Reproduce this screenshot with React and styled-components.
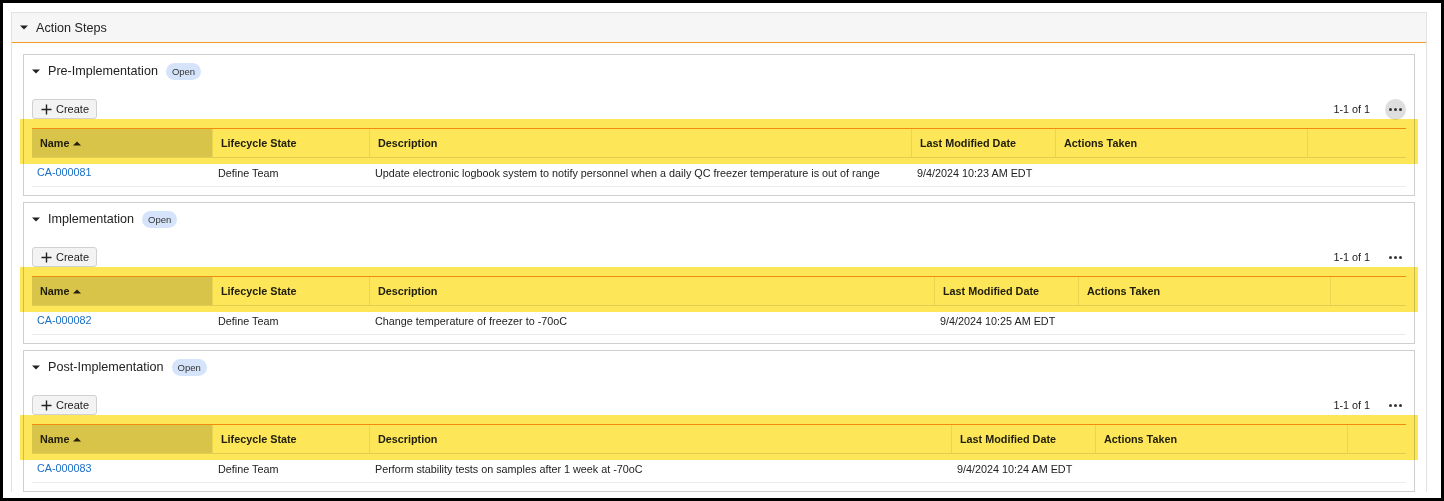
import React from "react";
import styled, { createGlobalStyle } from "styled-components";

const Global = createGlobalStyle`
  html, body { margin: 0; padding: 0; background: #fff; }
  body { font-family: "Liberation Sans", Arial, sans-serif; color: #222; }
  * { box-sizing: border-box; }
`;

const Frame = styled.div`
  width: 1444px;
  height: 501px;
  border: 3px solid #000;
  padding: 9px 14px 0 8px;
  overflow: hidden;
  background: #fff;
`;

const Panel = styled.section`
  border: 1px solid #e2e2e2;
  border-bottom: none;
`;

const PanelHeader = styled.div`
  height: 30px;
  display: flex;
  align-items: center;
  padding-left: 8px;
  gap: 8px;
  background: #f6f6f6;
  border-bottom: 1px solid #f39a23;
  font-size: 12.6px;
  color: #222;
`;

const PanelBody = styled.div`
  padding: 11px 11px 0 11px;
  display: flex;
  flex-direction: column;
  gap: 6px;
`;

const Box = styled.div`
  border: 1px solid #cfcfcf;
  padding: 7px 8px 8px 8px;
`;

const TitleRow = styled.div`
  height: 18px;
  display: flex;
  align-items: center;
  font-size: 12.6px;
  color: #222;
`;

const TitleText = styled.span`
  margin-left: 8px;
`;

const Badge = styled.span`
  margin-left: 8px;
  height: 17px;
  padding: 0 6px;
  border-radius: 9px;
  background: #d5e4fa;
  font-size: 9.5px;
  color: #333;
  display: inline-flex;
  align-items: center;
`;

const Toolbar = styled.div`
  margin-top: 19px;
  height: 20px;
  display: flex;
  align-items: center;
  justify-content: space-between;
`;

const CreateButton = styled.button`
  height: 20px;
  width: 65px;
  padding: 0 0 0 8px;
  display: inline-flex;
  align-items: center;
  gap: 4px;
  border: 1px solid #d0d0d0;
  border-radius: 3px;
  background: #f3f3f3;
  font-family: "Liberation Sans", Arial, sans-serif;
  font-size: 11px;
  color: #222;
  cursor: pointer;
`;

const Pager = styled.div`
  display: flex;
  align-items: center;
  gap: 15px;
  font-size: 10.8px;
  color: #222;
`;

const DotsButton = styled.span`
  width: 21px;
  height: 21px;
  border-radius: 50%;
  display: inline-flex;
  align-items: center;
  justify-content: center;
  gap: 2px;
  background: ${(p) => (p.$active ? "#dedede" : "transparent")};
`;

const Dot = styled.i`
  width: 3px;
  height: 3px;
  border-radius: 50%;
  background: #333;
`;

const TableWrap = styled.div`
  position: relative;
  margin-top: 9px;
`;

const Highlight = styled.span`
  position: absolute;
  top: -9px;
  left: -12px;
  right: -12px;
  height: 45px;
  background: #fde758;
  mix-blend-mode: multiply;
  pointer-events: none;
  z-index: 2;
`;

const Row = styled.div`
  display: grid;
  grid-template-columns: ${(p) => p.$cols};
  border-top: ${(p) => (p.$head ? "1px solid #f39a23" : "none")};
  border-bottom: 1px solid ${(p) => (p.$head ? "#e3e3e3" : "#ebebeb")};
  height: ${(p) => (p.$head ? "30px" : "29px")};
`;

const HeadCell = styled.div`
  display: flex;
  align-items: center;
  gap: 4px;
  padding-left: 8px;
  font-size: 10.8px;
  font-weight: bold;
  color: #222;
  background: ${(p) => (p.$sorted ? "#d9d9d4" : "#fff")};
  border-left: ${(p) => (p.$first ? "none" : "1px solid #ebebeb")};
`;

const Cell = styled.div`
  display: flex;
  align-items: center;
  padding-left: ${(p) => (p.$link ? "5px" : "6px")};
  padding-top: ${(p) => (p.$link ? "0" : "2px")};
  font-size: 10.8px;
  color: #222;
  white-space: nowrap;
`;

const Link = styled.a`
  color: #1a6fc4;
  text-decoration: none;
`;

const Caret = ({ size = 8 }) => (
  <svg width={size} height={size / 2 + 1} viewBox="0 0 8 5" aria-hidden="true">
    <path d="M0 0.5 L8 0.5 L4 4.5 Z" fill="#222" />
  </svg>
);

const SortUp = () => (
  <svg width="8" height="5" viewBox="0 0 8 5" aria-hidden="true">
    <path d="M0 4.5 L8 4.5 L4 0.5 Z" fill="#222" />
  </svg>
);

const Plus = () => (
  <svg width="11" height="11" viewBox="0 0 11 11" aria-hidden="true">
    <path d="M5.5 0.5 V10.5 M0.5 5.5 H10.5" stroke="#222" strokeWidth="1.4" fill="none" />
  </svg>
);

const steps = [
  {
    title: "Pre-Implementation",
    desc: 542,
    id: "CA-000081",
    text: "Update electronic logbook system to notify personnel when a daily QC freezer temperature is out of range",
    date: "9/4/2024 10:23 AM EDT",
    active: true,
  },
  {
    title: "Implementation",
    desc: 565,
    id: "CA-000082",
    text: "Change temperature of freezer to -70oC",
    date: "9/4/2024 10:25 AM EDT",
  },
  {
    title: "Post-Implementation",
    desc: 582,
    id: "CA-000083",
    text: "Perform stability tests on samples after 1 week at -70oC",
    date: "9/4/2024 10:24 AM EDT",
  },
];

function Step({ s }) {
  const cols = `180px 157px ${s.desc}px 144px 252px 1fr`;
  return (
    <Box>
      <TitleRow>
        <Caret />
        <TitleText>{s.title}</TitleText>
        <Badge>Open</Badge>
      </TitleRow>
      <Toolbar>
        <CreateButton>
          <Plus />
          Create
        </CreateButton>
        <Pager>
          <span>1-1 of 1</span>
          <DotsButton $active={s.active}>
            <Dot />
            <Dot />
            <Dot />
          </DotsButton>
        </Pager>
      </Toolbar>
      <TableWrap>
        <Highlight />
        <Row $head $cols={cols}>
          <HeadCell $sorted $first>
            Name <SortUp />
          </HeadCell>
          <HeadCell>Lifecycle State</HeadCell>
          <HeadCell>Description</HeadCell>
          <HeadCell>Last Modified Date</HeadCell>
          <HeadCell>Actions Taken</HeadCell>
          <HeadCell />
        </Row>
        <Row $cols={cols}>
          <Cell $link>
            <Link href="#">{s.id}</Link>
          </Cell>
          <Cell>Define Team</Cell>
          <Cell>{s.text}</Cell>
          <Cell>{s.date}</Cell>
          <Cell />
          <Cell />
        </Row>
      </TableWrap>
    </Box>
  );
}

export default function App() {
  return (
    <>
      <Global />
      <Frame>
        <Panel>
          <PanelHeader>
            <Caret />
            <span>Action Steps</span>
          </PanelHeader>
          <PanelBody>
            {steps.map((s) => (
              <Step key={s.id} s={s} />
            ))}
          </PanelBody>
        </Panel>
      </Frame>
    </>
  );
}
